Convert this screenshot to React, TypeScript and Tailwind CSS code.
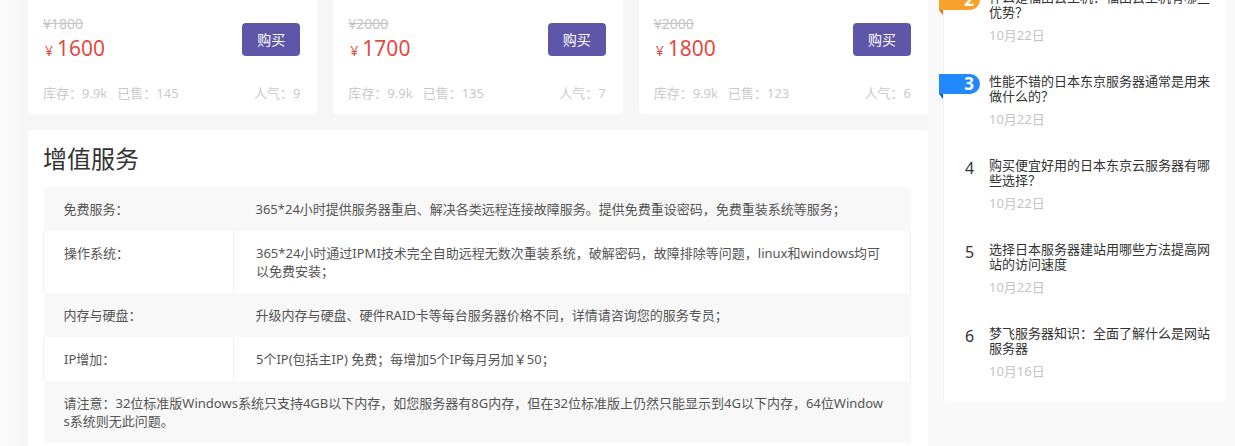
import React from "react";

const products = [
  { old: "¥1800", price: "1600", sold: "145", pop: "9" },
  { old: "¥2000", price: "1700", sold: "135", pop: "7" },
  { old: "¥2000", price: "1800", sold: "123", pop: "6" },
];

const rows = [
  {
    label: "免费服务：",
    value: "365*24小时提供服务器重启、解决各类远程连接故障服务。提供免费重设密码，免费重装系统等服务；",
  },
  {
    label: "操作系统：",
    value: "365*24小时通过IPMI技术完全自助远程无数次重装系统，破解密码，故障排除等问题，linux和windows均可以免费安装；",
  },
  {
    label: "内存与硬盘：",
    value: "升级内存与硬盘、硬件RAID卡等每台服务器价格不同，详情请咨询您的服务专员；",
  },
  {
    label: "IP增加：",
    value: "5个IP(包括主IP) 免费；每增加5个IP每月另加￥50；",
  },
];

const news = [
  { n: 2, title: "什么是福田云主机：福田云主机有哪些优势？", date: "10月22日", badge: "orange" },
  { n: 3, title: "性能不错的日本东京服务器通常是用来做什么的？", date: "10月22日", badge: "blue" },
  { n: 4, title: "购买便宜好用的日本东京云服务器有哪些选择？", date: "10月22日" },
  { n: 5, title: "选择日本服务器建站用哪些方法提高网站的访问速度", date: "10月22日" },
  { n: 6, title: "梦飞服务器知识：全面了解什么是网站服务器", date: "10月16日" },
];

function ProductCard({ p }: { p: (typeof products)[number] }) {
  return (
    <div className="bg-white rounded-b-[4px] pl-[15px] pr-[17px] pt-[14px] pb-[11px]">
      <div className="flex items-center justify-between">
        <div>
          <div className="text-[14px] leading-[20px] text-[#c4c4c4] line-through">{p.old}</div>
          <div className="flex items-baseline text-[#e5493f] leading-[28px]">
            <span className="text-[14px] mr-[4px] ml-[2px]">¥</span>
            <span className="text-[21px]">{p.price}</span>
          </div>
        </div>
        <button className="w-[58px] h-[33px] rounded-[4px] bg-[#5f56a9] text-white text-[14px]">购买</button>
      </div>
      <div className="mt-[18px] flex justify-between text-[13px] leading-[20px] text-[#cacaca]">
        <div>
          <span>库存：9.9k</span>
          <span className="ml-[10px]">已售：{p.sold}</span>
        </div>
        <span>人气：{p.pop}</span>
      </div>
    </div>
  );
}

function Badge({ n, color }: { n: number; color: string }) {
  const body = color === "orange" ? "bg-[#f8a22c]" : "bg-[#2188ff]";
  const tail = color === "orange" ? "border-t-[#c97c15]" : "border-t-[#1160c4]";
  return (
    <div className={`absolute left-[-5px] top-0 w-[41px] h-[20px] ${body} rounded-r-[10px] text-white text-[17px] font-bold leading-[20px] text-right pr-[6px]`}>
      {n}
      <span className={`absolute left-0 top-full w-0 h-0 border-t-[5px] border-l-[4px] border-l-transparent ${tail}`} />
    </div>
  );
}

export default function App() {
  return (
    <div
      className="flex w-full min-h-[446px] h-[446px] overflow-hidden bg-[#f6f6f6]"
      style={{ fontFamily: '"Noto Sans", "Noto Sans CJK SC", sans-serif' }}
    >
      <div className="w-[28px] shrink-0 bg-gradient-to-r from-[#fbfbfb] to-[#f6f6f6]" />
      <div className="w-[900px] shrink-0">
        <div className="grid grid-cols-3 gap-[16px]">
          {products.map((p, i) => (
            <ProductCard key={i} p={p} />
          ))}
        </div>
        <div className="mt-[16px] bg-white rounded-t-[4px] pl-[15px] pr-[17px] pt-[13px] pb-[10px]">
          <h2 className="text-[24px] leading-[32px] text-[#333] mb-[12px] font-normal">增值服务</h2>
          <table className="w-full border-collapse text-[13px] leading-[18px] text-[#555]">
            <tbody>
              {rows.map((r, i) => {
                const gray = i % 2 === 0;
                return (
                  <tr key={i} className={gray ? "bg-[#f8f8f8]" : "bg-white"}>
                    <td
                      className={`w-[190px] align-top pl-[20px] pr-[10px] py-[13px] ${
                        gray ? "" : "border-l border-r border-[#f1f1f1]"
                      }`}
                    >
                      {r.label}
                    </td>
                    <td
                      className={`align-top pl-[22px] pr-[26px] py-[13px] ${
                        gray ? "" : "border-r border-[#f1f1f1]"
                      }`}
                    >
                      {r.value}
                    </td>
                  </tr>
                );
              })}
              <tr className="bg-[#f8f8f8]">
                <td colSpan={2} className="pl-[20px] pr-[26px] py-[13px] break-all">
                  请注意：32位标准版Windows系统只支持4GB以下内存，如您服务器有8G内存，但在32位标准版上仍然只能显示到4G以下内存，64位Windows系统则无此问题。
                </td>
              </tr>
            </tbody>
          </table>
        </div>
      </div>
      <div className="flex-1 bg-[#f9f9f9] pl-[15px]">
        <div className="w-[283px] -mt-[10px] bg-white rounded-b-[4px] border-l border-[#efefef] pb-[23px]">
          <div className="flex flex-col gap-[31px]">
            {news.map((it) => (
              <div key={it.n} className="flex">
                <div className="relative w-[45px] shrink-0">
                  {it.badge ? (
                    <Badge n={it.n} color={it.badge} />
                  ) : (
                    <div className="pl-[21px] text-[16px] leading-[20px] text-[#333]">{it.n}</div>
                  )}
                </div>
                <div className="w-[222px]">
                  <div className="text-[13px] leading-[15px] text-[#333]">{it.title}</div>
                  <div className="mt-[8px] text-[13px] leading-[15px] text-[#c4c4c4]">{it.date}</div>
                </div>
              </div>
            ))}
          </div>
        </div>
      </div>
    </div>
  );
}
